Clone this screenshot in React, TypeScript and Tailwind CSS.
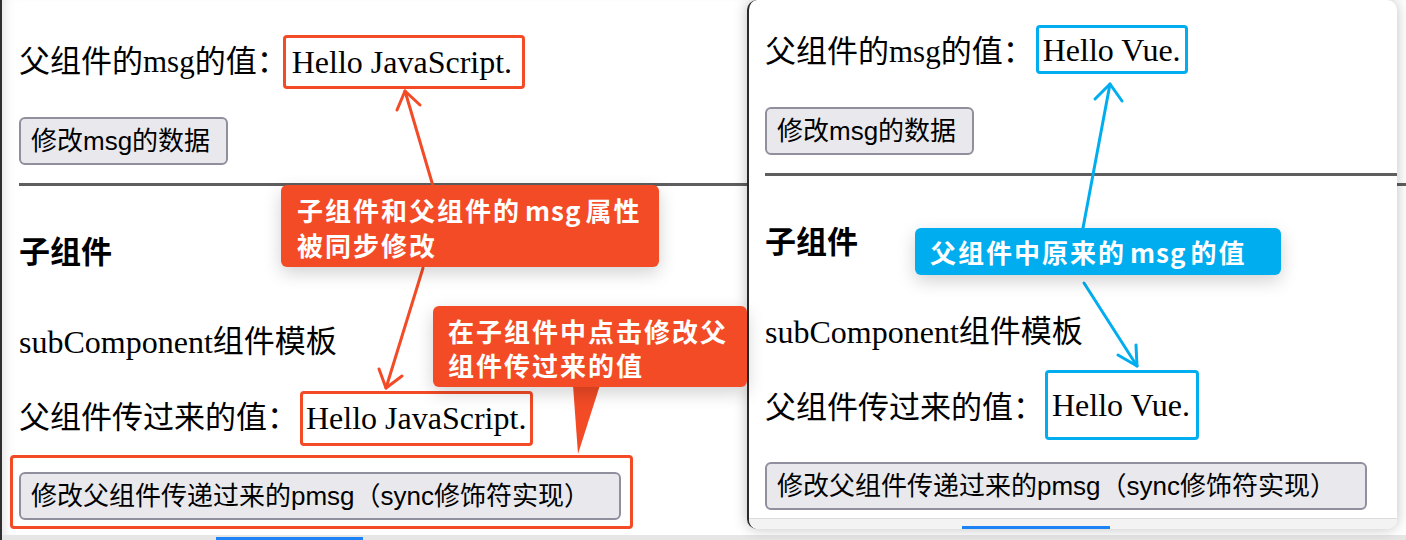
import React from 'react';

const serif = "font-['Liberation_Serif','Noto_Sans_CJK_SC',serif]";
const sans = "font-['Liberation_Sans','Noto_Sans_CJK_SC',sans-serif]";
const btn = `${sans} h-[48px] pl-[10px] text-left text-[26px] text-black bg-[#e9e9ed] border-2 border-[#8f8f9d] rounded-[6px] block`;

type PageProps = {
  value: string;
  firstRow: string;
  topBox: string;
  bottomBox: string;
  buttonWrap: string;
};

const DemoPage: React.FC<PageProps> = ({ value, firstRow, topBox, bottomBox, buttonWrap }) => {
  return (
    <div className={`${serif} text-[31px] text-black`}>
      <div className={`${firstRow} h-[54px] flex items-center`}>
        <span>父组件的msg的值：</span>
        <span className={`flex items-center rounded-[4px] text-[32px] ${topBox}`}>{value}</span>
      </div>
      <button className={`${btn} mt-[28px] w-[209px]`}>修改msg的数据</button>
      <div className="mt-[18px] h-[3px] bg-[#5e5e5e]" />
      <h3 className="mt-[40px] h-[54px] flex items-center font-bold">子组件</h3>
      <div className="mt-[35px] h-[54px] flex items-center">
        <span className="text-[32px]">subComponent</span>组件模板
      </div>
      <div className="mt-[22px] h-[54px] flex items-center">
        <span>父组件传过来的值：</span>
        <span className={`flex items-center rounded-[4px] text-[32px] ${bottomBox}`}>{value}</span>
      </div>
      <div className={buttonWrap}>
        <button className={`${btn} w-[602px]`}>修改父组件传递过来的pmsg（sync修饰符实现）</button>
      </div>
    </div>
  );
};

const Callout: React.FC<{ className: string; children: React.ReactNode }> = ({ className, children }) => (
  <div
    className={`absolute rounded-[6px] text-white font-bold text-[26px] tracking-[2px] font-['Noto_Sans_CJK_SC',sans-serif] shadow-[0_6px_18px_rgba(0,0,0,0.18)] ${className}`}
  >
    {children}
  </div>
);

const Msg = () => <span className="mx-[4px] tracking-[1px]">msg</span>;

export default function App() {
  return (
    <div className="relative w-[1406px] h-[540px] overflow-hidden bg-white">
      {/* window behind */}
      <div className="h-[540px] flex flex-col border-l-2 border-[#2f2f2f] shadow-[inset_10px_0_12px_-8px_rgba(0,0,0,0.12)]">
        <div className="pl-[17px]">
          <DemoPage
            value="Hello JavaScript."
            firstRow="mt-[35px]"
            topBox="-ml-[5px] h-[54px] pl-[6px] pr-[10px] border-[3px] border-[#f34b26]"
            bottomBox="ml-[2px] h-[55px] pl-[3px] pr-[4px] border-[3px] border-[#f34b26]"
            buttonWrap="-ml-[9px] mt-[10px] w-[623px] h-[74px] pl-[6px] pt-[14px] border-[3px] border-[#f34b26] rounded-[4px]"
          />
        </div>
        <div className="mt-auto h-[5px] bg-[#e6e6e6] pl-[214px] pt-[2px]">
          <div className="w-[147px] h-[3px] bg-[#1d82f5]" />
        </div>
      </div>

      {/* window in front */}
      <div className="absolute left-[747px] top-0 w-[650px] h-[529px] flex flex-col bg-white rounded-[10px] border-l-2 border-[#2a2a2a] overflow-hidden shadow-[0_0_14px_rgba(0,0,0,0.25)]">
        <div className="pl-[16px]">
          <DemoPage
            value="Hello Vue."
            firstRow="mt-[25px]"
            topBox="ml-[2px] self-start h-[49px] pl-[4px] pr-[4px] border-[3px] border-[#00aeef]"
            bottomBox="ml-[1px] mb-[6px] h-[70px] pl-[4px] pr-[6px] border-[3px] border-[#00aeef]"
            buttonWrap="mt-[27px]"
          />
        </div>
        <div className="mt-auto h-[11px] bg-[#f3f3f3] border-t border-[#dcdcdc] pl-[213px] pt-[7px]">
          <div className="w-[148px] h-[3px] bg-[#1d82f5]" />
        </div>
      </div>

      {/* arrows */}
      <svg className="absolute left-0 top-0" width="1406" height="540" fill="none" strokeWidth="3" strokeLinecap="round" strokeLinejoin="round">
        <g stroke="#f34b26">
          <path d="M433 186 L405 91" />
          <path d="M397 110 L405 91 L420 105" />
          <path d="M423 268 L386 388" />
          <path d="M379 369 L386 388 L402 376" />
          <polygon points="573,385 600,385 578,454" fill="#f34b26" stroke="none" />
        </g>
        <g stroke="#00aeef">
          <path d="M1083 228 L1110 84" />
          <path d="M1095 99 L1110 84 L1122 101" />
          <path d="M1084 283 L1137 366" />
          <path d="M1118 355 L1137 366 L1136 345" />
        </g>
      </svg>

      {/* callouts */}
      <Callout className="left-[281px] top-[185px] w-[378px] h-[82px] pl-[16px] pt-[7px] leading-[35px] bg-[#f34b26]">
        子组件和父组件的<Msg />属性
        <br />
        被同步修改
      </Callout>
      <Callout className="left-[433px] top-[306px] w-[314px] h-[81px] pl-[15px] pt-[8px] leading-[34px] bg-[#f34b26]">
        在子组件中点击修改父
        <br />
        组件传过来的值
      </Callout>
      <Callout className="left-[915px] top-[228px] w-[366px] h-[47px] pl-[15px] leading-[47px] bg-[#00aeef]">
        父组件中原来的<Msg />的值
      </Callout>
    </div>
  );
}
